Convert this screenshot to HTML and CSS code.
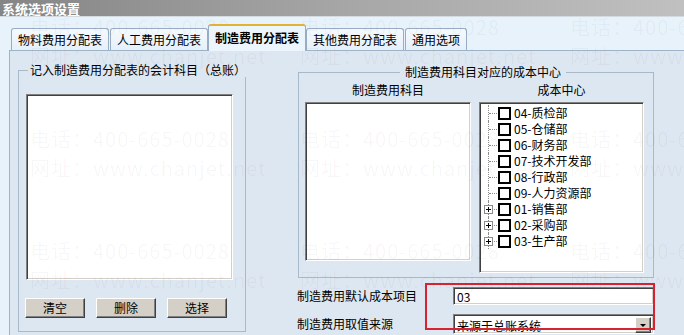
FILE: index.html
```html
<!DOCTYPE html>
<html lang="zh-CN">
<head>
<meta charset="UTF-8">
<title>系统选项设置</title>
<link rel="stylesheet" href="styles.css">
</head>
<body>

<div class="titlebar">系统选项设置</div>

<div class="tabs">
  <div class="tab">物料费用分配表</div>
  <div class="tab">人工费用分配表</div>
  <div class="tab active">制造费用分配表</div>
  <div class="tab">其他费用分配表</div>
  <div class="tab">通用选项</div>
</div>

<div class="panel">

  <fieldset class="grp grp-left">
    <legend>记入制造费用分配表的会计科目（总账）</legend>
    <div class="gbody">
      <div class="listbox acct-list"></div>
      <div class="btns">
        <button class="btn">清空</button>
        <button class="btn">删除</button>
        <button class="btn">选择</button>
      </div>
    </div>
  </fieldset>

  <div class="right">
    <fieldset class="grp grp-right">
      <legend>制造费用科目对应的成本中心</legend>
      <div class="gbody">
        <div class="col col-a">
          <div class="colhead">制造费用科目</div>
          <div class="listbox item-list"></div>
        </div>
        <div class="col col-b">
          <div class="colhead">成本中心</div>
          <div class="listbox tree">
            <div class="node"><span class="ln"></span><span class="cb"></span>04-质检部</div>
            <div class="node"><span class="ln"></span><span class="cb"></span>05-仓储部</div>
            <div class="node"><span class="ln"></span><span class="cb"></span>06-财务部</div>
            <div class="node"><span class="ln"></span><span class="cb"></span>07-技术开发部</div>
            <div class="node"><span class="ln"></span><span class="cb"></span>08-行政部</div>
            <div class="node"><span class="ln"></span><span class="cb"></span>09-人力资源部</div>
            <div class="node"><span class="ln"><span class="pm"></span></span><span class="cb"></span>01-销售部</div>
            <div class="node"><span class="ln"><span class="pm"></span></span><span class="cb"></span>02-采购部</div>
            <div class="node"><span class="ln"><span class="pm"></span></span><span class="cb"></span>03-生产部</div>
          </div>
        </div>
      </div>
    </fieldset>

    <div class="form">
      <div class="frow">
        <span class="flabel">制造费用默认成本项目</span>
        <div class="field">03</div>
      </div>
      <div class="frow frow-sel">
        <span class="flabel">制造费用取值来源</span>
        <div class="field select">来源于总账系统<span class="drop"></span></div>
      </div>
      <div class="mark"></div>
    </div>
  </div>

</div>

<div class="wm">
  <div>电话：400-665-0028<br>网址：www.chanjet.net</div>
  <div>电话：400-665-0028<br>网址：www.chanjet.net</div>
  <div>电话：400-665-0028<br>网址：www.chanjet.net</div>
  <div>电话：400-665-0028<br>网址：www.chanjet.net</div>
  <div>电话：400-665-0028<br>网址：www.chanjet.net</div>
  <div>电话：400-665-0028<br>网址：www.chanjet.net</div>
  <div>电话：400-665-0028<br>网址：www.chanjet.net</div>
  <div>电话：400-665-0028<br>网址：www.chanjet.net</div>
  <div>电话：400-665-0028<br>网址：www.chanjet.net</div>
</div>

</body>
</html>
```

FILE: styles.css
```css
body {
  margin: 0;
  width: 684px;
  height: 335px;
  overflow: hidden;
  position: relative;
  background-color: #e7f2fb;
  font-family: "Noto Sans CJK SC", sans-serif;
  font-size: 12px;
  line-height: 14px;
  color: #000;
}

.titlebar {
  height: 16px;
  padding-left: 2px;
  background: linear-gradient(to right, #858585, #a6a6a6 50%, #c0c0c0);
  border-bottom: 1px solid #d3dae0;
  color: #fff;
  font-weight: bold;
  font-size: 13px;
  line-height: 17px;
  overflow: hidden;
}

.tabs {
  display: flex;
  align-items: flex-end;
  height: 33px;
  padding-left: 11px;
}

.tab {
  height: 21px;
  padding: 0 6px;
  margin-right: 1px;
  border: 1px solid #98adc3;
  border-bottom: none;
  border-radius: 3px 3px 0 0;
  background: linear-gradient(#f5f9fd, #e6f0f9);
  line-height: 21px;
  white-space: nowrap;
}

.tab.active {
  position: relative;
  z-index: 1;
  height: 25px;
  margin: 0 0 -1px -1px;
  padding: 0 6px;
  border-top: 2px solid #e2b233;
  background: #edf5fc;
  font-weight: bold;
  line-height: 24px;
}

.panel {
  display: flex;
  align-items: flex-start;
  height: 284px;
  margin-left: 9px;
  border-top: 1px solid #9fb3c8;
  border-left: 1px solid #9fb3c8;
  background-color: #dde7f1;
}

.grp {
  margin: 0;
  padding: 0;
  min-width: 0;
  border: 1px solid #a7b9cb;
  box-sizing: border-box;
}

.grp legend {
  padding: 0 2px;
  line-height: 14px;
  white-space: nowrap;
}

.grp-left {
  width: 228px;
  margin: 12px 0 0 8px;
}

.grp-left legend {
  margin-left: 9px;
}

.grp-left .gbody {
  padding: 17px 0 13px 7px;
}

.listbox {
  box-sizing: border-box;
  background: #fff;
  border: 1px solid;
  border-color: #808080 #fff #fff #808080;
  box-shadow: inset 1px 1px #404040, inset -1px -1px #d4d0c8;
}

.acct-list {
  width: 207px;
  height: 186px;
}

.btns {
  display: flex;
  gap: 11px;
  margin: 18px 0 0 -1px;
}

.btn {
  width: 60px;
  height: 20px;
  padding: 0;
  font: inherit;
  background: #d4d0c8;
  border: 1px solid;
  border-color: #fff #404040 #404040 #fff;
  box-shadow: inset -1px -1px #808080;
}

.right {
  margin-left: 51px;
}

.grp-right {
  width: 356px;
  margin: 14px 0 0 1px;
}

.grp-right legend {
  margin-left: 101px;
  padding: 0 5px;
}

.grp-right .gbody {
  display: flex;
  align-items: flex-start;
  gap: 8px;
  padding: 4px 9px 4px 6px;
}

.colhead {
  text-align: center;
  margin-bottom: 5px;
}

.item-list {
  width: 166px;
  height: 159px;
}

.tree {
  width: 165px;
  height: 171px;
  padding: 2px 0 0 2px;
}

.node {
  display: flex;
  align-items: center;
  height: 16px;
  white-space: nowrap;
}

.ln {
  position: relative;
  width: 16px;
  height: 16px;
  flex: none;
}

.ln::before {
  content: "";
  position: absolute;
  left: 6px;
  top: 0;
  bottom: 0;
  border-left: 1px dotted #8c8c8c;
}

.ln::after {
  content: "";
  position: absolute;
  left: 7px;
  right: 1px;
  top: 8px;
  border-top: 1px dotted #8c8c8c;
}

.pm {
  position: absolute;
  z-index: 1;
  left: 2px;
  top: 4px;
  width: 9px;
  height: 9px;
  box-sizing: border-box;
  border: 1px solid #8c8c8c;
  background: #fff;
}

.pm::before,
.pm::after {
  content: "";
  position: absolute;
  background: #000;
}

.pm::before {
  left: 1px;
  top: 3px;
  width: 5px;
  height: 1px;
}

.pm::after {
  left: 3px;
  top: 1px;
  width: 1px;
  height: 5px;
}

.cb {
  width: 13px;
  height: 13px;
  flex: none;
  box-sizing: border-box;
  margin-right: 3px;
  border: 2px solid #000;
  background: #fff;
}

.form {
  position: relative;
  padding-top: 9px;
}

.frow {
  display: flex;
  align-items: center;
  height: 18px;
}

.frow-sel {
  height: 20px;
  margin-top: 9px;
}

.flabel {
  width: 156px;
  flex: none;
}

.field {
  position: relative;
  box-sizing: border-box;
  width: 201px;
  height: 100%;
  padding: 2px 0 0 3px;
  background: #fff;
  border: 1px solid;
  border-color: #808080 #fff #fff #808080;
  box-shadow: inset 1px 1px #404040, inset -1px -1px #d4d0c8;
  line-height: 14px;
}

.select {
  padding-top: 4px;
}

.drop {
  position: absolute;
  right: 2px;
  top: 2px;
  width: 16px;
  height: 16px;
  box-sizing: border-box;
  background: #d4d0c8;
  border: 1px solid;
  border-color: #fff #404040 #404040 #fff;
  box-shadow: inset -1px -1px #808080;
}

.drop::after {
  content: "";
  position: absolute;
  left: 4px;
  top: 6px;
  border-left: 3px solid transparent;
  border-right: 3px solid transparent;
  border-top: 3px solid #000;
}

.mark {
  position: absolute;
  z-index: 2;
  left: 128px;
  top: 5px;
  width: 230px;
  height: 47px;
  box-sizing: border-box;
  border: 2px solid #d52331;
}

.wm {
  position: absolute;
  top: 0;
  left: 0;
  width: 684px;
  height: 335px;
  box-sizing: border-box;
  overflow: hidden;
  pointer-events: none;
  padding: 12px 0 0 30px;
  display: grid;
  grid-template-columns: repeat(3, 270px);
  grid-auto-rows: 112px;
  font-size: 20px;
  line-height: 29px;
  letter-spacing: 1px;
  white-space: nowrap;
  color: rgba(0, 0, 0, 0.04);
}
```
